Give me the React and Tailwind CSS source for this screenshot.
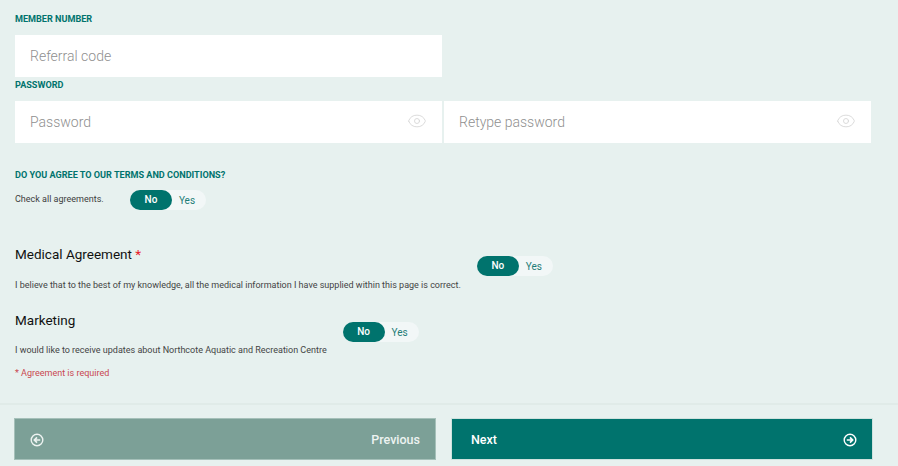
import React from 'react';
import { Eye } from 'lucide-react';

function CircleArrow({ dir }) {
  return (
    <svg width="14" height="14" viewBox="0 0 14 14" fill="none" stroke="currentColor" className="shrink-0">
      <circle cx="7" cy="7" r="5.8" strokeWidth="1.4" />
      {dir === 'left' ? (
        <path d="M10.2 7H4.6M7 4.4 4.4 7 7 9.6" strokeWidth="1.7" />
      ) : (
        <path d="M3.8 7h5.6M7 4.4 9.6 7 7 9.6" strokeWidth="1.7" />
      )}
    </svg>
  );
}

function Toggle({ className = '' }) {
  return (
    <div className={`flex w-[76px] h-5 rounded-full bg-[#f2f7f7] shrink-0 ${className}`}>
      <div className="w-[42px] h-5 rounded-full bg-[#00736d] text-white text-[10px] font-medium leading-[19px] text-center">No</div>
      <div className="flex-1 text-[#1f7d77] text-[10px] leading-[21px] text-center pr-[4px]">Yes</div>
    </div>
  );
}

function Label({ children, className = '' }) {
  return <div className={`text-[#00736d] text-[9.1px] font-bold leading-3 uppercase ${className}`}>{children}</div>;
}

function Field({ placeholder, eye, className = '' }) {
  return (
    <div className={`flex items-center justify-between w-[427px] h-[42px] bg-white pl-[15px] pr-[15px] ${className}`}>
      <span className="text-[#8f8f8f] text-sm font-light leading-5">{placeholder}</span>
      {eye && <Eye size={20} strokeWidth={1} className="text-[#d4d4d4] -mt-[3px]" />}
    </div>
  );
}

export default function App() {
  return (
    <div className="w-[898px] h-[466px] overflow-hidden bg-[#e7f1ef] font-['Roboto',sans-serif]">
      <div className="pl-[15px] pt-[13px]">
        <Label>Member number</Label>
        <Field placeholder="Referral code" className="mt-[10px]" />
        <Label className="mt-[2px]">Password</Label>
        <div className="flex gap-[2px] mt-[10px]">
          <Field placeholder="Password" eye />
          <Field placeholder="Retype password" eye />
        </div>

        <Label className="mt-[26px]">Do you agree to our terms and conditions?</Label>
        <div className="flex items-center mt-[9px]">
          <span className="w-[115px] text-[#3d3d3d] text-[9px] leading-3 -mt-[3px]">Check all agreements.</span>
          <Toggle />
        </div>

        <div className="flex mt-[34px]">
          <div>
            <div className="text-[#111] text-[13.5px] leading-5">
              Medical Agreement <span className="text-[#e8202a]">*</span>
            </div>
            <p className="text-[#444] text-[9px] leading-3 mt-[15px]">
              I believe that to the best of my knowledge, all the medical information I have supplied within this page is correct.
            </p>
          </div>
          <Toggle className="ml-[16px] mt-[12px]" />
        </div>

        <div className="flex mt-[19px]">
          <div>
            <div className="text-[#111] text-[13.5px] leading-5">Marketing</div>
            <p className="text-[#444] text-[9px] leading-3 mt-[14px]">
              I would like to receive updates about Northcote Aquatic and Recreation Centre
            </p>
          </div>
          <Toggle className="ml-[16px] mt-[12px]" />
        </div>

        <p className="text-[#c9484f] text-[9px] leading-3 mt-[11px]">* Agreement is required</p>
      </div>

      <div className="h-[2px] bg-[#e0ebe8] mt-[24px]" />

      <div className="flex gap-[15px] pl-[14px] mt-[13px]">
        <button className="flex items-center justify-between w-[422px] h-[42px] bg-[#7ca097] border border-[#a5c0b9] pl-[15px] pr-[15px] pt-[1px] text-[#edf3f1] text-[12.5px] font-medium">
          <CircleArrow dir="left" />
          <span className="pt-[1px]">Previous</span>
        </button>
        <button className="flex items-center justify-between w-[422px] h-[42px] bg-[#00736d] border border-[#cfe2de] pl-[19px] pr-[15px] pt-[1px] text-white text-[12.5px] font-medium">
          <span className="pt-[1px]">Next</span>
          <CircleArrow dir="right" />
        </button>
      </div>
    </div>
  );
}
